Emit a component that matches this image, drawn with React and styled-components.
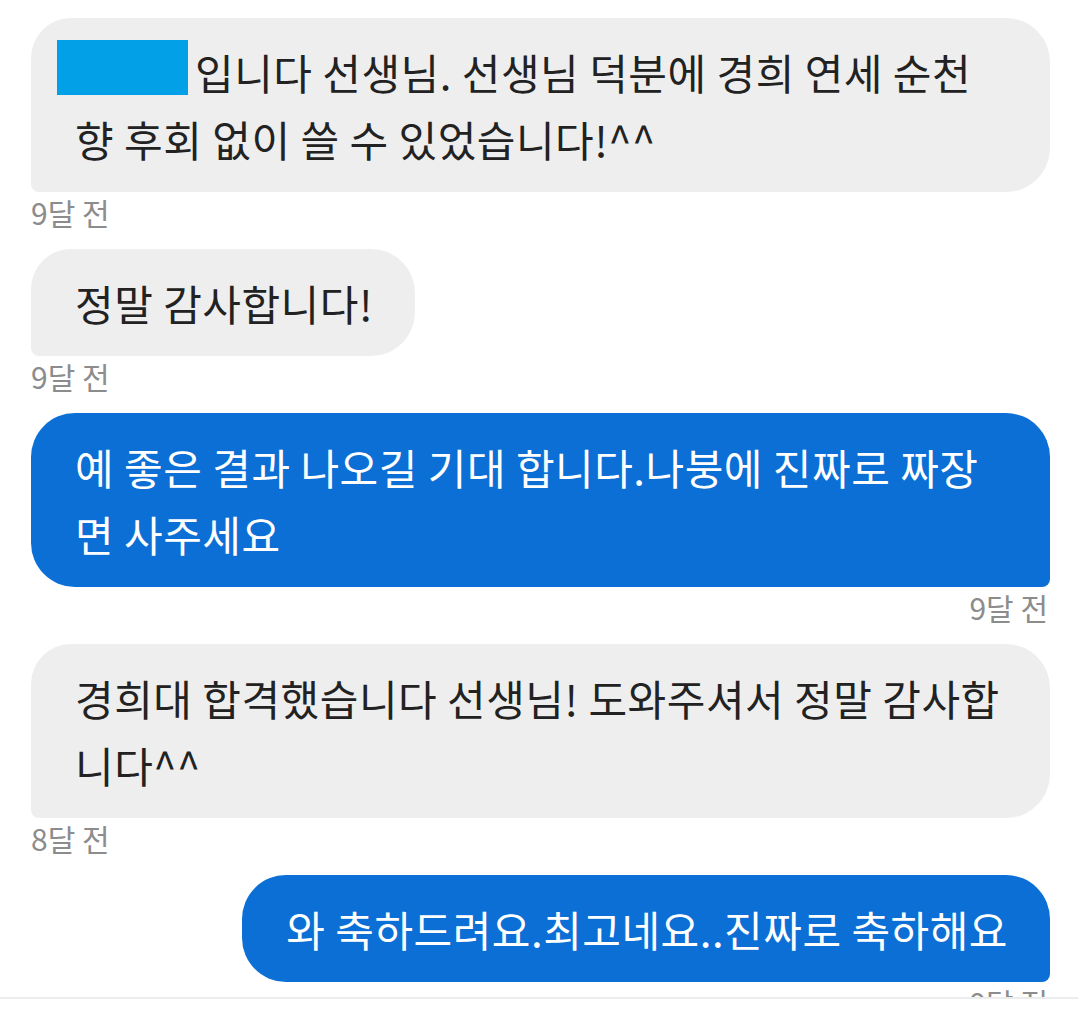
import styled, { createGlobalStyle } from 'styled-components';

const GlobalStyle = createGlobalStyle`
  html, body {
    margin: 0;
    background: #ffffff;
  }
  body {
    font-family: 'Noto Sans CJK KR', 'Noto Sans', sans-serif;
  }
`;

const Thread = styled.div`
  display: flex;
  flex-direction: column;
  padding: 18px 28px 0 31px;
`;

const Group = styled.div`
  display: flex;
  flex-direction: column;
  align-items: ${(p) => (p.$mine ? 'flex-end' : 'flex-start')};
  margin-bottom: 17px;
`;

const Bubble = styled.div`
  box-sizing: border-box;
  max-width: 100%;
  width: ${(p) => (p.$full ? '100%' : 'auto')};
  padding: 20px 42px 20px 44px;
  font-size: 42px;
  line-height: 67px;
  letter-spacing: 0.5px;
  white-space: pre-line;
  word-break: keep-all;
  color: ${(p) => (p.$mine ? '#ffffff' : '#222222')};
  background: ${(p) => (p.$mine ? '#0b6fd6' : '#eeeeee')};
  border-radius: ${(p) => (p.$mine ? '44px 44px 8px 44px' : '40px 44px 44px 8px')};
`;

const Redacted = styled.span`
  display: inline-block;
  width: 131px;
  height: 55px;
  margin: 2px 7px 0 -18px;
  vertical-align: top;
  background: #02a0e6;
`;

const Time = styled.div`
  font-size: 30px;
  line-height: 40px;
  color: #8c8c8c;
  padding: ${(p) => (p.$mine ? '0 2px 0 0' : '0')};
`;

const InputBar = styled.div`
  position: fixed;
  left: 0;
  right: 0;
  bottom: 0;
  height: 26px;
  background: #ffffff;
  border-top: 2px solid #ececec;
`;

const messages = [
  {
    mine: false,
    full: true,
    redact: true,
    text: '입니다 선생님. 선생님 덕분에 경희 연세 순천\n향 후회 없이 쓸 수 있었습니다!^^',
    time: '9달 전',
  },
  { mine: false, text: '정말 감사합니다!', time: '9달 전' },
  {
    mine: true,
    full: true,
    text: '예 좋은 결과 나오길 기대 합니다.나붕에 진짜로 짜장\n면 사주세요',
    time: '9달 전',
  },
  {
    mine: false,
    full: true,
    text: '경희대 합격했습니다 선생님! 도와주셔서 정말 감사합\n니다^^',
    time: '8달 전',
  },
  { mine: true, text: '와 축하드려요.최고네요..진짜로 축하해요', time: '9달 전' },
];

export default function App() {
  return (
    <>
      <GlobalStyle />
      <Thread>
        {messages.map((m, i) => (
          <Group key={i} $mine={m.mine}>
            <Bubble $mine={m.mine} $full={m.full}>
              {m.redact && <Redacted />}
              {m.text}
            </Bubble>
            <Time $mine={m.mine}>{m.time}</Time>
          </Group>
        ))}
      </Thread>
      <InputBar />
    </>
  );
}
